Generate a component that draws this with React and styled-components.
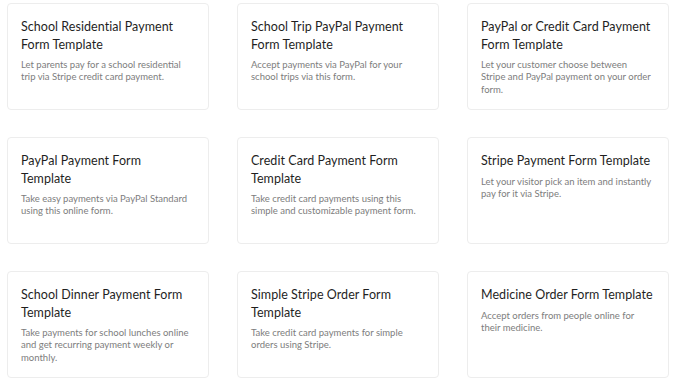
import React from "react";
import styled, { createGlobalStyle } from "styled-components";

const GlobalStyle = createGlobalStyle`
  body {
    margin: 0;
    background: #fff;
    font-family: Lato, "Open Sans", sans-serif;
  }
`;

const GridStyled = styled.div`
  display: grid;
  grid-template-columns: repeat(3, 202px);
  grid-auto-rows: 107px;
  column-gap: 28px;
  row-gap: 27px;
  padding: 3px 7px;
`;

const CardStyled = styled.div`
  box-sizing: border-box;
  background: #fff;
  border: 1px solid #ededed;
  border-radius: 4px;
  padding: 14px 15px 13px 13px;
`;

const TitleStyled = styled.h3`
  margin: 0;
  font-size: 12.5px;
  line-height: 17.5px;
  font-weight: 400;
  color: #1f1f1f;
  letter-spacing: 0.05px;
`;

const DescriptionStyled = styled.p`
  margin: 6px 0 0;
  font-size: 9.5px;
  line-height: 12.4px;
  color: #7d7d7d;
`;

const templates = [
  {
    title: "School Residential Payment Form Template",
    description:
      "Let parents pay for a school residential trip via Stripe credit card payment.",
  },
  {
    title: "School Trip PayPal Payment Form Template",
    description: "Accept payments via PayPal for your school trips via this form.",
  },
  {
    title: "PayPal or Credit Card Payment Form Template",
    description:
      "Let your customer choose between Stripe and PayPal payment on your order form.",
  },
  {
    title: "PayPal Payment Form Template",
    description: "Take easy payments via PayPal Standard using this online form.",
  },
  {
    title: "Credit Card Payment Form Template",
    description:
      "Take credit card payments using this simple and customizable payment form.",
  },
  {
    title: "Stripe Payment Form Template",
    description:
      "Let your visitor pick an item and instantly pay for it via Stripe.",
  },
  {
    title: "School Dinner Payment Form Template",
    description:
      "Take payments for school lunches online and get recurring payment weekly or monthly.",
  },
  {
    title: "Simple Stripe Order Form Template",
    description: "Take credit card payments for simple orders using Stripe.",
  },
  {
    title: "Medicine Order Form Template",
    description: "Accept orders from people online for their medicine.",
  },
];

export default function App() {
  return (
    <>
      <GlobalStyle />
      <GridStyled>
        {templates.map((item) => (
          <CardStyled key={item.title}>
            <TitleStyled>{item.title}</TitleStyled>
            <DescriptionStyled>{item.description}</DescriptionStyled>
          </CardStyled>
        ))}
      </GridStyled>
    </>
  );
}
